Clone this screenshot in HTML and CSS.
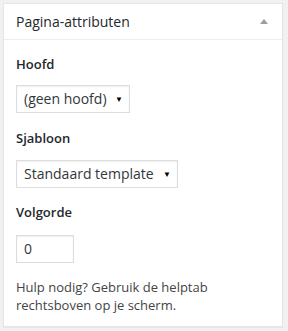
FILE: index.html
```html
<!DOCTYPE html>
<html lang="nl">
<head>
<meta charset="utf-8">
<link rel="stylesheet" href="styles.css">
</head>
<body>
<div class="postbox">
  <div class="hndle">
    <h2 class="title">Pagina-attributen</h2>
    <span class="toggle"></span>
  </div>
  <div class="inside">
    <p class="label l1">Hoofd</p>
    <div class="select sel1"><span>(geen hoofd)</span><span class="arrow">▼</span></div>
    <p class="label l2">Sjabloon</p>
    <div class="select sel2"><span>Standaard template</span><span class="arrow">▼</span></div>
    <p class="label l3">Volgorde</p>
    <div class="input">0</div>
    <p class="help">Hulp nodig? Gebruik de helptab rechtsboven op je scherm.</p>
  </div>
</div>
</body>
</html>
```
FILE: styles.css
```css
html, body { margin: 0; padding: 0; }
body {
  background: #f1f1f1;
  font-family: "Open Sans", "Liberation Sans", sans-serif;
  color: #444;
  font-size: 13px;
  line-height: 1.4;
  padding: 3px 5px 0 3px;
  width: 288px;
  height: 331px;
  box-sizing: border-box;
}
.postbox {
  background: #fff;
  border: 1px solid #e5e5e5;
  box-shadow: 0 1px 1px rgba(0,0,0,0.04);
  height: 324px;
  box-sizing: border-box;
}
.hndle {
  display: flex;
  align-items: center;
  justify-content: space-between;
  padding: 8px 12px;
  border-bottom: 1px solid #eee;
}
.title {
  margin: 0;
  font-size: 14px;
  font-weight: 400;
  line-height: 19px;
  color: #23282d;
}
.toggle {
  width: 0; height: 0;
  border-left: 4px solid transparent;
  border-right: 4px solid transparent;
  border-bottom: 5px solid #9a9ea2;
  margin-right: 2px;
}
.inside {
  padding: 15px 12px 12px;
  display: flex;
  flex-direction: column;
  align-items: flex-start;
}
.label {
  margin: 0;
  font-weight: 600;
  line-height: 18px;
  color: #23282d;
}
.l1 { margin-bottom: 12px; }
.l2 { margin-bottom: 13px; }
.l3 { margin-bottom: 14px; }
.select {
  height: 28px;
  box-sizing: border-box;
  border: 1px solid #ddd;
  box-shadow: inset 0 1px 2px rgba(0,0,0,0.07);
  display: flex;
  align-items: center;
  justify-content: space-between;
  padding: 0 6px 0 7px;
  font-size: 14px;
  color: #32373c;
}
.sel1 { width: 114px; margin-bottom: 16px; }
.sel2 { width: 162px; margin-bottom: 15px; }
.arrow { font-size: 8px; color: #000; }
.input {
  width: 58px;
  height: 28px;
  box-sizing: border-box;
  border: 1px solid #ddd;
  box-shadow: inset 0 1px 2px rgba(0,0,0,0.07);
  font-size: 14px;
  color: #32373c;
  padding: 0 7px;
  display: flex;
  align-items: center;
  margin-bottom: 15px;
}
.help {
  margin: 0;
  line-height: 18px;
  color: #444;
}
```
